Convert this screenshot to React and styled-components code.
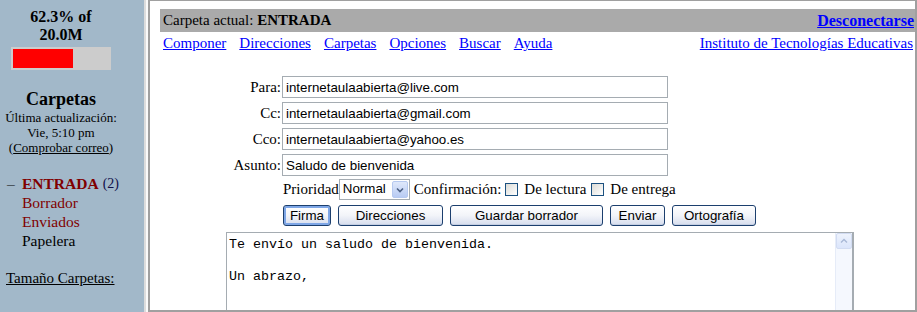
import React from 'react';
import styled, { createGlobalStyle } from 'styled-components';

const GlobalStyle = createGlobalStyle`
  html, body {
    margin: 0;
    padding: 0;
    background: #fff;
  }
  body {
    font-family: "Liberation Serif", "Times New Roman", serif;
    font-size: 15px;
    color: #000;
  }
`;

const Frame = styled.div`
  display: flex;
  width: 917px;
  height: 312px;
  overflow: hidden;
`;

const Sidebar = styled.div`
  width: 144px;
  flex-shrink: 0;
  background: #a2b8c9;
  padding-top: 8px;
  box-sizing: border-box;
`;

const SideColumn = styled.div`
  width: 122px;
  text-align: center;
`;

const QuotaText = styled.div`
  font-weight: bold;
  font-size: 16px;
  line-height: 18px;
`;

const QuotaBar = styled.div`
  width: 100px;
  height: 23px;
  box-sizing: border-box;
  padding: 2px;
  margin: 3px 0 0 11px;
  background: #cccccc;
`;

const QuotaFill = styled.div`
  height: 100%;
  background: #ff0000;
`;

const FoldersTitle = styled.div`
  font-weight: bold;
  font-size: 18px;
  line-height: 21px;
  margin-top: 19px;
`;

const SmallText = styled.div`
  font-size: 13px;
  line-height: 15px;
`;

const SideLink = styled.a`
  color: #000;
  text-decoration: underline;
`;

const FolderList = styled.ul`
  list-style: none;
  margin: 19px 0 0 0;
  padding: 0 0 0 7px;
  font-size: 15.5px;
  line-height: 19px;
`;

const FolderItem = styled.li`
  display: flex;
  color: ${p => (p.$plain ? '#000' : '#800000')};
  font-weight: ${p => (p.$current ? 'bold' : 'normal')};
`;

const Bullet = styled.span`
  width: 15px;
  font-weight: normal;
  color: #000;
`;

const Count = styled.span`
  font-weight: normal;
  font-size: 14px;
  color: #10104a;
  margin-left: 4px;
`;

const SizeLink = styled.a`
  display: block;
  margin: 19px 0 0 6px;
  font-size: 15px;
  line-height: 19px;
  color: #000;
  text-decoration: underline;
`;

const Splitter = styled.div`
  width: 4px;
  flex-shrink: 0;
  border-left: 2px solid #dcdcdc;
  background: #fafafa;
  box-sizing: border-box;
`;

const Main = styled.div`
  flex: 1;
  border-top: 1px solid #a0a0a0;
  border-left: 2px solid #a0a0a0;
  border-right: 2px solid #a0a0a0;
  border-bottom: 2px solid #a0a0a0;
  padding: 8px 0 0 10px;
  overflow: hidden;
`;

const HeaderBar = styled.div`
  display: flex;
  justify-content: space-between;
  align-items: center;
  height: 23px;
  padding: 0 1px 0 3px;
  background: #aaaaaa;
  line-height: 17px;
`;

const Link = styled.a`
  color: #0000ff;
  text-decoration: underline;
  font-weight: ${p => (p.$bold ? 'bold' : 'normal')};
  font-size: ${p => (p.$bold ? '16px' : '15px')};
`;

const NavRow = styled.div`
  display: flex;
  justify-content: space-between;
  margin-top: 3px;
  padding: 0 2px 0 3px;
  line-height: 17px;
`;

const NavLinks = styled.div`
  display: flex;
  gap: 13px;
`;

const Form = styled.div`
  margin-top: 24px;
  display: flex;
  flex-direction: column;
  gap: 4px;
`;

const FieldRow = styled.div`
  display: flex;
  align-items: center;
`;

const Label = styled.label`
  width: 121px;
  margin-right: 1px;
  text-align: right;
`;

const TextInput = styled.input`
  width: 386px;
  height: 22px;
  box-sizing: border-box;
  border: 1px solid #a5acb2;
  padding: 0 3px;
  font-family: "Liberation Sans", Arial, sans-serif;
  font-size: 13.33px;
  color: #000;
  outline: none;
`;

const OptionsRow = styled.div`
  display: flex;
  align-items: center;
  margin: 3px 0 0 123px;
  height: 21px;
`;

const Select = styled.div`
  display: flex;
  width: 71px;
  height: 21px;
  box-sizing: border-box;
  border: 1px solid #a5acb2;
  background: #fff;
  margin-right: 4px;
`;

const SelectValue = styled.div`
  flex: 1;
  padding-left: 3px;
  font-family: "Liberation Sans", Arial, sans-serif;
  font-size: 13.33px;
  line-height: 18px;
`;

const SelectArrow = styled.div`
  width: 16px;
  margin: 1px;
  border: 1px solid #b6c9f0;
  border-radius: 2px;
  box-sizing: border-box;
  background: linear-gradient(#dfe8fb, #b8cbf3);
  display: flex;
  align-items: center;
  justify-content: center;
`;

const Check = styled.span`
  display: inline-block;
  width: 13px;
  height: 13px;
  box-sizing: border-box;
  border: 1px solid #1c5180;
  background: linear-gradient(135deg, #dcdcd7, #fff);
  margin: 0 6px 0 ${p => p.$ml || 4}px;
`;

const ButtonRow = styled.div`
  display: flex;
  gap: 7px;
  margin: 5px 0 0 123px;
`;

const Button = styled.button`
  width: ${p => p.$w}px;
  height: 21px;
  padding: 0;
  box-sizing: border-box;
  border: 1px solid #1c3f6e;
  border-radius: 3px;
  background: linear-gradient(#ffffff 0%, #f2f4f9 50%, #d6dded 100%);
  box-shadow: ${p => (p.$default ? 'inset 0 0 0 2px #7ea6e6' : 'inset 0 -1px 0 #c4cee2')};
  font-family: "Liberation Sans", Arial, sans-serif;
  font-size: 13.33px;
  color: #000;
  flex-shrink: 0;
`;

const Editor = styled.div`
  display: flex;
  width: 628px;
  height: 100px;
  box-sizing: border-box;
  margin: 6px 0 0 66px;
  border: 1px solid #a5acb2;
  border-right-width: 2px;
`;

const EditorText = styled.textarea`
  flex: 1;
  border: none;
  resize: none;
  overflow: hidden;
  outline: none;
  padding: 4px 2px;
  font-family: "Liberation Mono", "Courier New", monospace;
  font-size: 13.33px;
  line-height: 16px;
  color: #000;
`;

const ScrollTrack = styled.div`
  width: 16px;
  background: #f5f8fe;
  border-left: 1px solid #e6ecf8;
`;

const ScrollUp = styled.div`
  height: 16px;
  box-sizing: border-box;
  border: 1px solid #d2dcf2;
  border-radius: 2px;
  background: linear-gradient(#eef3fd, #dbe5fb);
  display: flex;
  align-items: center;
  justify-content: center;
`;

const quota = 62.3;

export default function App() {
  return (
    <>
      <GlobalStyle />
      <Frame>
        <Sidebar>
          <SideColumn>
            <QuotaText>{quota}% of</QuotaText>
            <QuotaText>20.0M</QuotaText>
            <QuotaBar>
              <QuotaFill style={{ width: `${quota}%` }} />
            </QuotaBar>
            <FoldersTitle>Carpetas</FoldersTitle>
            <SmallText>Última actualización:</SmallText>
            <SmallText>Vie, 5:10 pm</SmallText>
            <SmallText>
              (<SideLink>Comprobar correo</SideLink>)
            </SmallText>
          </SideColumn>
          <FolderList>
            <FolderItem $current>
              <Bullet>–</Bullet>ENTRADA<Count>(2)</Count>
            </FolderItem>
            <FolderItem>
              <Bullet />Borrador
            </FolderItem>
            <FolderItem>
              <Bullet />Enviados
            </FolderItem>
            <FolderItem $plain>
              <Bullet />Papelera
            </FolderItem>
          </FolderList>
          <SizeLink>Tamaño Carpetas:</SizeLink>
        </Sidebar>
        <Splitter />
        <Main>
          <HeaderBar>
            <span>
              Carpeta actual: <b>ENTRADA</b>
            </span>
            <Link $bold>Desconectarse</Link>
          </HeaderBar>
          <NavRow>
            <NavLinks>
              <Link>Componer</Link>
              <Link>Direcciones</Link>
              <Link>Carpetas</Link>
              <Link>Opciones</Link>
              <Link>Buscar</Link>
              <Link>Ayuda</Link>
            </NavLinks>
            <Link>Instituto de Tecnologías Educativas</Link>
          </NavRow>
          <Form>
            <FieldRow>
              <Label>Para:</Label>
              <TextInput readOnly value="internetaulaabierta@live.com" />
            </FieldRow>
            <FieldRow>
              <Label>Cc:</Label>
              <TextInput readOnly value="internetaulaabierta@gmail.com" />
            </FieldRow>
            <FieldRow>
              <Label>Cco:</Label>
              <TextInput readOnly value="internetaulaabierta@yahoo.es" />
            </FieldRow>
            <FieldRow>
              <Label>Asunto:</Label>
              <TextInput readOnly value="Saludo de bienvenida" />
            </FieldRow>
          </Form>
          <OptionsRow>
            <span>Prioridad</span>
            <Select>
              <SelectValue>Normal</SelectValue>
              <SelectArrow>
                <svg width="8" height="6" viewBox="0 0 8 6">
                  <path d="M1 1.5 L4 4.5 L7 1.5" fill="none" stroke="#4d6185" strokeWidth="1.6" />
                </svg>
              </SelectArrow>
            </Select>
            <span>Confirmación:</span>
            <Check $ml={4} />
            <span>De lectura</span>
            <Check $ml={5} />
            <span>De entrega</span>
          </OptionsRow>
          <ButtonRow>
            <Button $w={48} $default>Firma</Button>
            <Button $w={105}>Direcciones</Button>
            <Button $w={153}>Guardar borrador</Button>
            <Button $w={55}>Enviar</Button>
            <Button $w={84}>Ortografía</Button>
          </ButtonRow>
          <Editor>
            <EditorText
              readOnly
              value={'Te envío un saludo de bienvenida.\n\nUn abrazo,'}
            />
            <ScrollTrack>
              <ScrollUp>
                <svg width="8" height="6" viewBox="0 0 8 6">
                  <path d="M1 4.5 L4 1.5 L7 4.5" fill="none" stroke="#a9b8d6" strokeWidth="1.4" />
                </svg>
              </ScrollUp>
            </ScrollTrack>
          </Editor>
        </Main>
      </Frame>
    </>
  );
}
